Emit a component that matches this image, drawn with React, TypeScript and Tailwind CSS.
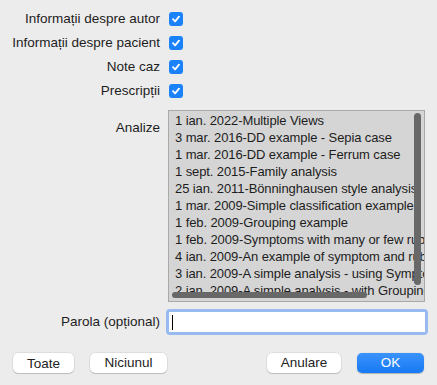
import React from "react"

const analyses = [
  "1 ian. 2022-Multiple Views",
  "3 mar. 2016-DD example - Sepia case",
  "1 mar. 2016-DD example - Ferrum case",
  "1 sept. 2015-Family analysis",
  "25 ian. 2011-Bönninghausen style analysis",
  "1 mar. 2009-Simple classification example",
  "1 feb. 2009-Grouping example",
  "1 feb. 2009-Symptoms with many or few rubrics",
  "4 ian. 2009-An example of symptom and rubric weights",
  "3 ian. 2009-A simple analysis - using Symptoms",
  "2 ian. 2009-A simple analysis - with Grouping",
]

const options = ["Informații despre autor", "Informații despre pacient", "Note caz", "Prescripții"]

const Checkbox = () => (
  <div className="w-[14px] h-[14px] rounded-[3px] bg-[#1a82fb] flex items-center justify-center">
    <svg width="10" height="10" viewBox="0 0 10 10" fill="none">
      <path d="M2 5.2 L4.1 7.4 L8 2.6" stroke="white" strokeWidth="1.8" strokeLinecap="round" strokeLinejoin="round" />
    </svg>
  </div>
)

const Button = ({ label, width, primary }: { label: string; width: string; primary?: boolean }) => (
  <button
    className={
      primary
        ? `${width} h-[20px] rounded-[5px] bg-gradient-to-b from-[#3a93fb] to-[#1579f3] text-white text-[13.5px] leading-none shadow-[0_0.5px_1px_rgba(0,0,0,0.25)]`
        : `${width} h-[20px] rounded-[5px] bg-white text-[#222] text-[13.5px] leading-none shadow-[0_0_0_0.5px_rgba(0,0,0,0.12),0_1px_1px_rgba(0,0,0,0.15)]`
    }
  >
    {label}
  </button>
)

export default function App() {
  return (
    <div
      className="w-[437px] h-[385px] bg-[#ececec] text-[#1d1d1d] text-[13.5px] pt-[7px]"
      style={{ fontFamily: '"Liberation Sans", Arial, sans-serif' }}
    >
      {options.map((o) => (
        <div key={o} className="flex items-center h-[24px]">
          <div className="w-[160px] text-right">{o}</div>
          <div className="ml-[9px]">
            <Checkbox />
          </div>
        </div>
      ))}

      <div className="flex mt-[7px]">
        <div className="w-[160px] text-right pt-[8px]">Analize</div>
        <div className="ml-[8px] relative w-[257px] h-[192px] border border-[#a9a9a9] bg-[#d5d5d5] overflow-hidden text-[13px]">
          <div className="pt-[1px] pl-[6px] tracking-[-0.1px]">
            {analyses.map((a) => (
              <div key={a} className="h-[17px] leading-[17px] whitespace-nowrap">
                {a}
              </div>
            ))}
          </div>
          <div className="absolute right-[3px] top-[2px] w-[7px] h-[172px] rounded-full bg-[#686868]" />
          <div className="absolute left-[3px] bottom-[3px] w-[195px] h-[6px] rounded-full bg-[#686868]" />
        </div>
      </div>

      <div className="flex items-center mt-[7px]">
        <div className="w-[160px] text-right">Parola (opțional)</div>
        <div className="ml-[6px] w-[262px] h-[26px] rounded-[4px] bg-[#97bbf1] p-[3px]">
          <div className="w-full h-full bg-white flex items-center pl-[3px]">
            <div className="w-[1px] h-[15px] bg-black" />
          </div>
        </div>
      </div>

      <div className="flex items-center mt-[18px] px-[13px]">
        <Button label="Toate" width="w-[61px]" />
        <div className="ml-[16px]">
          <Button label="Niciunul" width="w-[77px]" />
        </div>
        <div className="ml-auto">
          <Button label="Anulare" width="w-[74px]" />
        </div>
        <div className="ml-[16px]">
          <Button label="OK" width="w-[67px]" primary />
        </div>
      </div>
    </div>
  )
}
